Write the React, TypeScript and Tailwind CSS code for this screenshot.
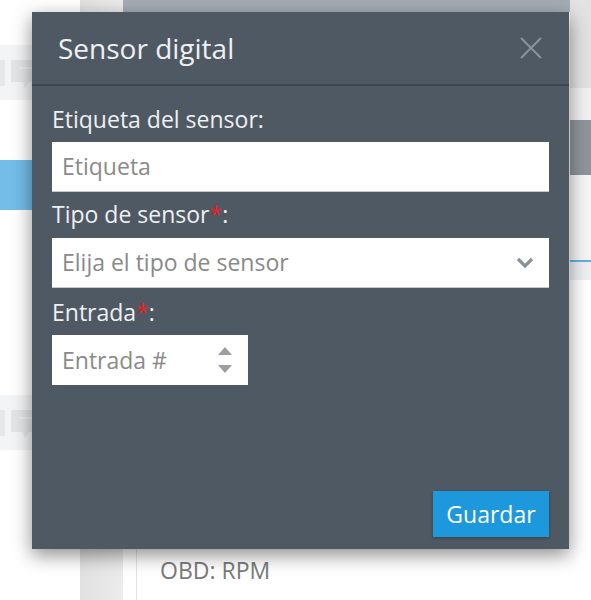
import React from 'react';

const font = { fontFamily: '"Open Sans", "Noto Sans", sans-serif' };

function BubbleRow() {
  return (
    <div className="flex h-[55px] items-center bg-[#f3f4f5] pl-[0px]">
      <div className="h-[26px] w-[5px] bg-[#e6e7e8]" />
      <svg width="26" height="34" viewBox="0 0 26 34" className="ml-[6px]">
        <path d="M0 4h26v22H18l-4 6-2-6H0z" fill="#e4e5e6" />
        <path d="M8 12h14" stroke="#f1f2f3" strokeWidth="1.5" />
      </svg>
    </div>
  );
}

function CloseIcon() {
  return (
    <svg width="22" height="22" viewBox="0 0 22 22">
      <path d="M1 1l20 20M21 1L1 21" stroke="#8a929a" strokeWidth="2" />
    </svg>
  );
}

function Chevron() {
  return (
    <svg width="18" height="12" viewBox="0 0 18 12">
      <path d="M2 2l7 7 7-7" fill="none" stroke="#8c9196" strokeWidth="3.2" />
    </svg>
  );
}

function Spinner() {
  return (
    <svg width="14" height="27" viewBox="0 0 14 27">
      <path d="M7 0l7 8H0z" fill="#9a9ea3" />
      <path d="M0 18h14l-7 8z" fill="#9a9ea3" />
    </svg>
  );
}

function Label({ text, required, className }: { text: string; required?: boolean; className: string }) {
  return (
    <div className={`text-[23px] leading-[30px] text-[#eef0f2] ${className}`}>
      {text}
      {required && <span className="text-[#ee1c24]">*</span>}:
    </div>
  );
}

export default function App() {
  return (
    <div className="relative h-[600px] w-[591px] overflow-hidden bg-white" style={font}>
      {/* page behind the dialog */}
      <div className="flex h-full">
        <div className="flex w-[80px] flex-col">
          <div className="h-[45px]" />
          <BubbleRow />
          <div className="h-[60px]" />
          <div className="h-[50px] bg-[#74bde9]" />
          <div className="h-[185px]" />
          <BubbleRow />
        </div>
        <div className="w-[43px] bg-gradient-to-r from-[#e1e1e1] to-[#ececec]" />
        <div className="flex flex-1 flex-col">
          <div className="h-[12px] bg-[#a5acb4]" />
          <div className="flex flex-1">
            <div className="w-[13px]" />
            <div className="flex flex-1 flex-col border-l border-[#e3e3e3] pl-[23px] pt-[543px]">
              <span className="text-[23px] leading-[30px] text-[#7a7a7a]">OBD: RPM</span>
            </div>
          </div>
        </div>
        <div className="flex w-[21px] flex-col">
          <div className="h-[88px] bg-[#e2e2e2]" />
          <div className="h-[32px] bg-[#f1f1f1]" />
          <div className="h-[55px] bg-[#8f959b]" />
          <div className="h-[85px] bg-[#f5f5f5]" />
          <div className="h-[2px] bg-[#5db2e8]" />
          <div className="h-[18px] bg-[#eeeff2]" />
        </div>
      </div>

      {/* dialog */}
      <div className="absolute left-[32px] top-[12px] flex h-[537px] w-[537px] flex-col bg-[#4f5964] shadow-[0_6px_18px_rgba(0,0,0,0.45)]">
        <div className="flex h-[74px] items-center justify-between border-b-2 border-[#3e474f] pl-[26px] pr-[27px]">
          <h2 className="text-[28px] leading-[36px] text-[#eef0f2]">Sensor digital</h2>
          <CloseIcon />
        </div>

        <div className="flex flex-1 flex-col px-[20px] pt-[18px]">
          <Label text="Etiqueta del sensor" className="mb-[8px]" />
          <div className="flex h-[50px] items-center border-b border-[#c9c9c9] bg-white pl-[10px] text-[23px] text-[#8a8a8a]">
            Etiqueta
          </div>

          <Label text="Tipo de sensor" required className="mb-[9px] mt-[7px]" />
          <div className="flex h-[50px] items-center justify-between border-b border-[#c9c9c9] bg-white pl-[10px] pr-[15px] text-[23px] text-[#8a8a8a]">
            <span>Elija el tipo de sensor</span>
            <Chevron />
          </div>

          <Label text="Entrada" required className="mb-[8px] mt-[9px]" />
          <div className="flex h-[50px] w-[196px] items-center justify-between bg-white pl-[10px] pr-[16px] text-[23px] text-[#8a8a8a]">
            <span>Entrada #</span>
            <Spinner />
          </div>

          <div className="mt-auto flex justify-end pb-[12px]">
            <button className="h-[46px] w-[116px] bg-[#1e98dc] text-[23px] text-white shadow-[0_1px_3px_rgba(0,0,0,0.3)]">
              Guardar
            </button>
          </div>
        </div>
      </div>
    </div>
  );
}
